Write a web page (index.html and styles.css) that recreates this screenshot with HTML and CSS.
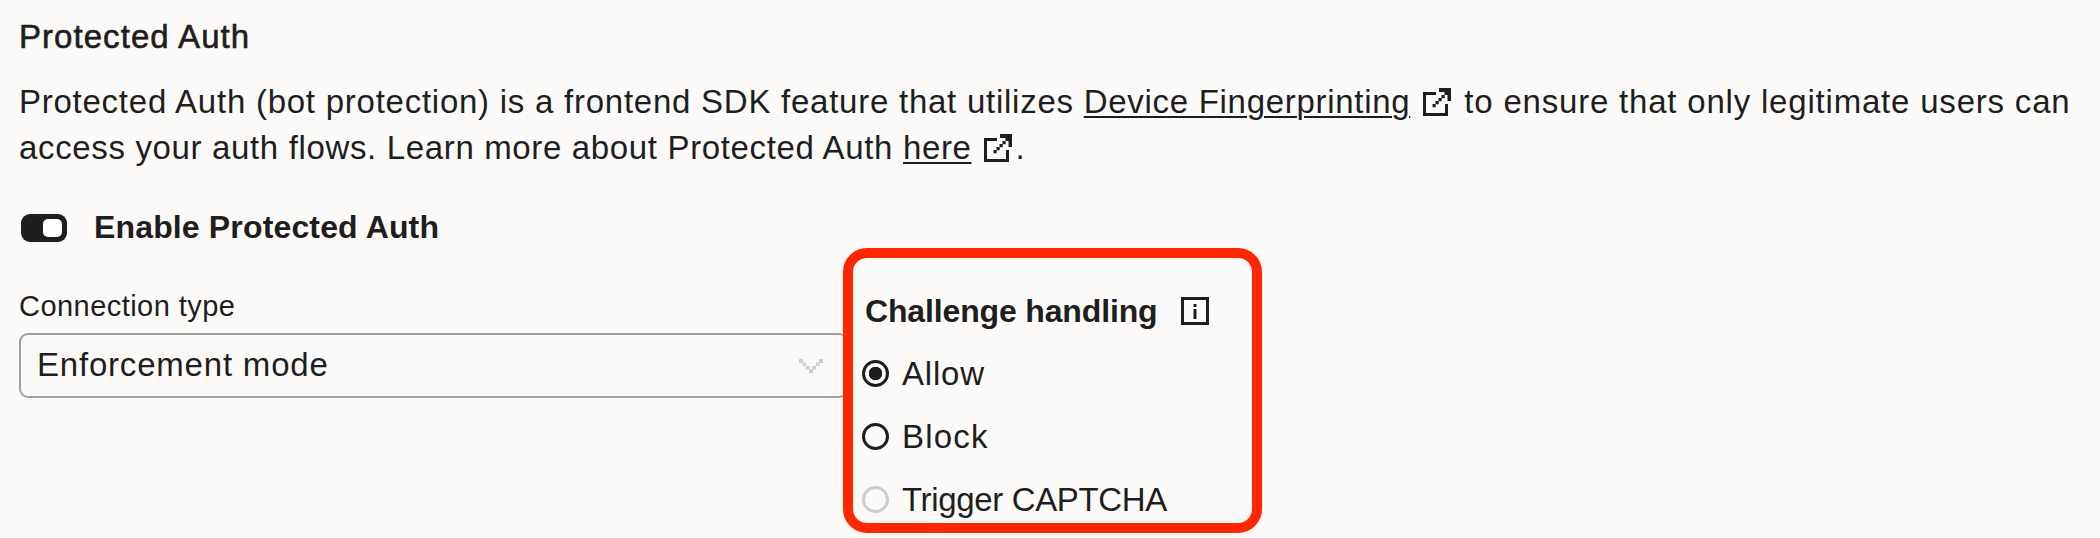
FILE: index.html
```html
<!DOCTYPE html>
<html lang="en">

<head>
    <meta charset="UTF-8">
    <meta name="viewport" content="width=device-width, initial-scale=1.0">
    <title>Protected Auth</title>
    <link rel="stylesheet" href="styles.css">
</head>

<body>
    <main class="settings">
        <h2 class="title">Protected Auth</h2>
        <p class="description">
            <span class="intro">Protected Auth (bot protection) is a frontend SDK feature that utilizes</span> <a class="link link-device" href="#">Device Fingerprinting</a><svg class="external" viewBox="0 0 28 29"><path d="M13 5.5H1.5V26.5H23.5V16" /><path class="solid" d="M16 0H28V13H24.5V7H21.5V4H16ZM18.5 7h3.2v3.2h-3.2zM15.5 10h3.2v3.2h-3.2zM12.5 13h3.2v3.2h-3.2zM9.5 16h3.2v3.2H9.5z" /></svg><span class="rest">to ensure that only legitimate users can</span><br>
            <span class="more">access your auth flows. Learn more about Protected Auth</span> <a class="link link-here" href="#">here</a><svg class="external external-end" viewBox="0 0 28 29"><path d="M13 5.5H1.5V26.5H23.5V16" /><path class="solid" d="M16 0H28V13H24.5V7H21.5V4H16ZM18.5 7h3.2v3.2h-3.2zM15.5 10h3.2v3.2h-3.2zM12.5 13h3.2v3.2h-3.2zM9.5 16h3.2v3.2H9.5z" /></svg>.
        </p>

        <div class="toggle-row">
            <div class="toggle"><div class="knob"></div></div>
            <span class="toggle-label">Enable Protected Auth</span>
        </div>

        <div class="options">
            <div class="connection">
                <label class="field-label">Connection type</label>
                <div class="select">
                    <span>Enforcement mode</span>
                    <svg class="chevron" viewBox="0 0 24 14">
                        <path d="M0 0h4v4H0zM3.5 3.5h3.5v3.5h-3.5zM7 7h3.5v3.5H7zM10 10h4v4h-4zM13.5 7h3.5v3.5h-3.5zM17 3.5h3.5v3.5h-3.5zM20 0h4v4h-4z" />
                    </svg>
                </div>
            </div>

            <div class="challenge">
                <div class="challenge-title">
                    <span>Challenge handling</span>
                    <svg class="info" viewBox="0 0 28 28">
                        <path d="M0 0H28V28H0ZM3 3V25H25V3ZM12.5 7h3v3h-3zM12.5 12h3v10h-3z" fill-rule="evenodd" />
                    </svg>
                </div>
                <div class="radio-row">
                    <span class="radio checked"></span>
                    <span class="allow">Allow</span>
                </div>
                <div class="radio-row">
                    <span class="radio"></span>
                    <span class="block">Block</span>
                </div>
                <div class="radio-row">
                    <span class="radio disabled"></span>
                    <span class="captcha">Trigger CAPTCHA</span>
                </div>
            </div>
        </div>
    </main>
</body>

</html>
```

FILE: styles.css
```css
* {
    box-sizing: border-box;
}
body {
    margin: 0;
    height: 538px;
    overflow: hidden;
    font-family: "Liberation Sans", Arial, sans-serif;
    font-size: 33px;
    line-height: 46px;
    letter-spacing: 0.8px;
    color: #1e1e1e;
    background-color: #fbfaf8;
}
.settings {
    padding: 14px 0 0 18px;
}
.title {
    margin: 0;
    padding-left: 1px;
    font-size: 33px;
    font-weight: normal;
    letter-spacing: 1.05px;
    -webkit-text-stroke: 0.6px #1e1e1e;
}
.description {
    margin: 19px 0 0;
    padding-left: 1px;
    white-space: nowrap;
}
.intro {
    letter-spacing: 0.75px;
}
.more {
    letter-spacing: 0.65px;
}
.link {
    color: inherit;
    text-decoration-thickness: 2px;
    text-underline-offset: 3px;
}
.link-device {
    letter-spacing: 0.7px;
}
.link-here {
    letter-spacing: 0.6px;
}
.external {
    width: 28px;
    height: 29px;
    margin: 0 13px;
    vertical-align: -4px;
    fill: none;
    stroke: #1e1e1e;
    stroke-width: 3;
}
.external .solid {
    fill: #1e1e1e;
    stroke: none;
}
.external-end {
    margin-right: 3px;
}
.toggle-row {
    display: flex;
    align-items: center;
    margin-top: 33px;
    padding-left: 3px;
}
.toggle {
    display: flex;
    justify-content: flex-end;
    align-items: center;
    width: 46px;
    height: 28px;
    margin-top: 2px;
    padding-right: 5px;
    border-radius: 9px;
    background-color: #1e1e1e;
}
.knob {
    width: 19px;
    height: 18px;
    border-radius: 5px;
    background-color: white;
}
.toggle-label {
    margin-left: 27px;
    font-size: 32px;
    font-weight: bold;
    letter-spacing: 0.15px;
}
.options {
    display: flex;
}
.connection {
    width: 830px;
    padding-top: 33px;
    padding-left: 1px;
}
.field-label {
    display: block;
    height: 50px;
    font-size: 29px;
    line-height: 46px;
    letter-spacing: 0.45px;
}
.select {
    display: flex;
    justify-content: space-between;
    align-items: center;
    height: 65px;
    padding: 0 23px 2px 16px;
    border: 2px solid #a0a09f;
    border-radius: 9px;
}
.chevron {
    width: 24px;
    height: 14px;
    margin-top: 3px;
    fill: #cdcdcc;
}
.challenge {
    position: relative;
    width: 419px;
    height: 285px;
    margin-top: -2px;
    margin-left: -5px;
    padding: 30px 0 0 9px;
    border: 10px solid #ff2600;
    border-radius: 24px;
    background-color: #fbfaf8;
}
.challenge-title {
    display: flex;
    align-items: center;
    height: 46px;
    padding-left: 3px;
    font-size: 32px;
    font-weight: bold;
    letter-spacing: -0.15px;
}
.info {
    width: 28px;
    height: 28px;
    margin-bottom: 1px;
    margin-left: 24px;
    fill: #1e1e1e;
}
.radio-row {
    display: flex;
    align-items: center;
    height: 46px;
    margin-top: 17px;
}
.radio {
    width: 27px;
    height: 27px;
    margin-right: 13px;
    margin-bottom: 1px;
    border: 3px solid #1e1e1e;
    border-radius: 50%;
}
.checked {
    background: radial-gradient(circle, #1e1e1e 6.5px, transparent 7px);
}
.disabled {
    border-color: #cdcdcc;
}
.block {
    letter-spacing: 1.2px;
}
.captcha {
    letter-spacing: -0.35px;
}
```
